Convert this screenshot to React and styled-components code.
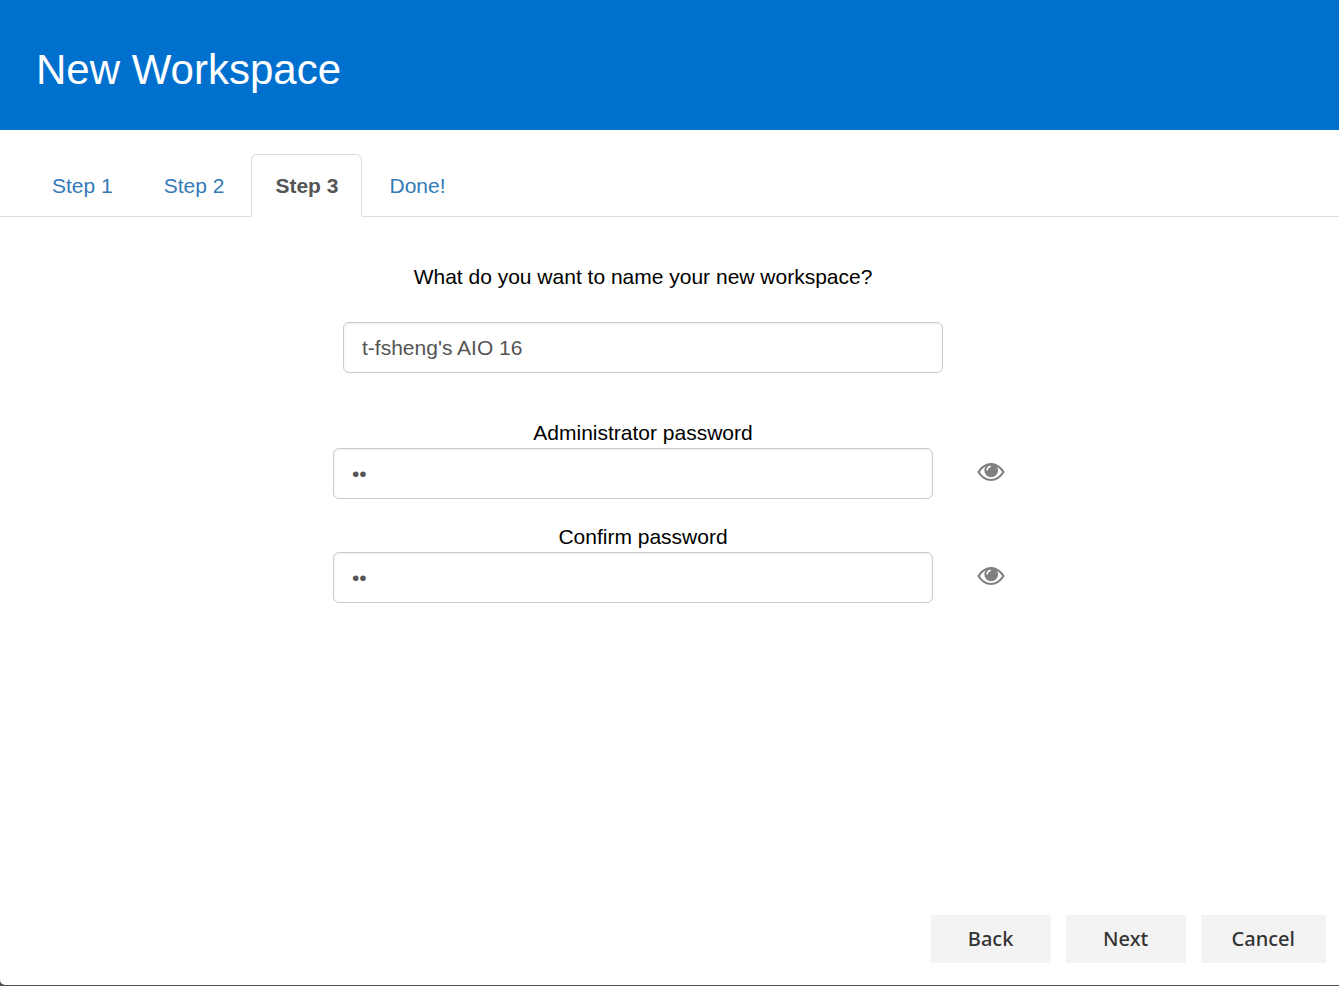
import React, { useState } from "react";
import styled, { createGlobalStyle } from "styled-components";

const GlobalStyle = createGlobalStyle`
  *, *::before, *::after { box-sizing: border-box; }
  body {
    margin: 0;
    background: #505050;
    color: #000;
    font: 21px/30px "Liberation Sans", Arial, sans-serif;
  }
`;

const Window = styled.div`
  display: flex;
  flex-direction: column;
  min-height: calc(100vh - 1px);
  margin-bottom: 1px;
  background: #fff;
  border-bottom-left-radius: 5px;
`;

const Header = styled.header`
  padding: 40px 36px 30px;
  background: #0070cf;
  color: #fff;
`;

const Title = styled.h1`
  margin: 0;
  font-size: 42px;
  line-height: 60px;
  font-weight: 400;
`;

const Tabs = styled.nav`
  display: flex;
  gap: 3px;
  margin-top: 24px;
  padding-left: 28px;
  border-bottom: 1px solid #ddd;
`;

const Tab = styled.a`
  margin-bottom: -1px;
  padding: 16px 23px 15px;
  border: 1px solid ${(p) => (p.$active ? "#ddd" : "transparent")};
  border-bottom-color: ${(p) => (p.$active ? "#fff" : "transparent")};
  border-radius: 6px 6px 0 0;
  background: ${(p) => (p.$active ? "#fff" : "transparent")};
  color: ${(p) => (p.$active ? "#555" : "#337ab7")};
  font-weight: ${(p) => (p.$active ? 700 : 400)};
  text-decoration: none;
`;

const Form = styled.form`
  display: flex;
  flex: 1;
  flex-direction: column;
`;

const Fields = styled.div`
  display: flex;
  flex: 1;
  flex-direction: column;
  padding: 45px 53px 0 0;
`;

const NameField = styled.div`
  display: flex;
  flex-direction: column;
  align-items: center;
  gap: 30px;
  margin-bottom: 45px;
`;

const PasswordField = styled.div`
  display: flex;
  flex-direction: column;
  margin-bottom: 23px;
`;

const Label = styled.label`
  text-align: center;
`;

const PasswordRow = styled.div`
  display: grid;
  grid-template-columns: 1fr minmax(0, 600px) 1fr;
  padding-right: 20px;
`;

const Input = styled.input`
  width: 100%;
  max-width: 600px;
  height: 51px;
  padding: 9px 18px;
  border: 1px solid #ccc;
  border-radius: 6px;
  background: #fff;
  box-shadow: inset 0 1px 2px rgba(0, 0, 0, 0.075);
  color: #555;
  font: inherit;
`;

const RevealButton = styled.button`
  display: flex;
  align-self: start;
  justify-self: start;
  margin-left: 44px;
  padding: 14px 0;
  border: 0;
  background: none;
  color: #808080;
  cursor: pointer;
`;

const Actions = styled.footer`
  display: flex;
  justify-content: flex-end;
  gap: 15px;
  padding: 0 13px 22px;
`;

const ActionButton = styled.button`
  min-width: 120px;
  height: 48px;
  padding: 0 31px;
  border: 0;
  background: #f3f3f3;
  color: #333;
  font: 500 20px/30px "Segoe UI", "Noto Sans", sans-serif;
  cursor: pointer;
`;

const EyeIcon = () => (
  <svg width="28" height="20" viewBox="0 0 28 20" fill="none" aria-hidden="true">
    <path
      d="M1.500 10C5 4.600 9.200 2 14 2S23 4.600 26.500 10C23 15.400 18.800 18 14 18S5 15.400 1.500 10Z"
      stroke="currentColor"
      strokeWidth="2.200"
    />
    <circle cx="14.200" cy="8.400" r="6.800" fill="currentColor" />
    <path d="M10.200 8C10.200 6 11.400 4.700 13.200 4.400" stroke="#fff" strokeWidth="1.500" strokeLinecap="round" />
  </svg>
);

function Password({ id, label }) {
  const [visible, setVisible] = useState(false);
  return (
    <PasswordField>
      <Label htmlFor={id}>{label}</Label>
      <PasswordRow>
        <span />
        <Input id={id} type={visible ? "text" : "password"} defaultValue="pw" />
        <RevealButton type="button" aria-label={`Show ${label}`} onClick={() => setVisible(!visible)}>
          <EyeIcon />
        </RevealButton>
      </PasswordRow>
    </PasswordField>
  );
}

const steps = ["Step 1", "Step 2", "Step 3", "Done!"];

export default function App() {
  return (
    <>
      <GlobalStyle />
      <Window>
        <Header>
          <Title>New Workspace</Title>
        </Header>
        <Tabs>
          {steps.map((step) => (
            <Tab key={step} href="#" $active={step === "Step 3"} aria-current={step === "Step 3" ? "step" : undefined}>
              {step}
            </Tab>
          ))}
        </Tabs>
        <Form onSubmit={(e) => e.preventDefault()}>
          <Fields>
            <NameField>
              <Label htmlFor="name">What do you want to name your new workspace?</Label>
              <Input id="name" type="text" defaultValue="t-fsheng's AIO 16" />
            </NameField>
            <Password id="password" label="Administrator password" />
            <Password id="confirm" label="Confirm password" />
          </Fields>
          <Actions>
            <ActionButton type="button">Back</ActionButton>
            <ActionButton type="submit">Next</ActionButton>
            <ActionButton type="button">Cancel</ActionButton>
          </Actions>
        </Form>
      </Window>
    </>
  );
}
